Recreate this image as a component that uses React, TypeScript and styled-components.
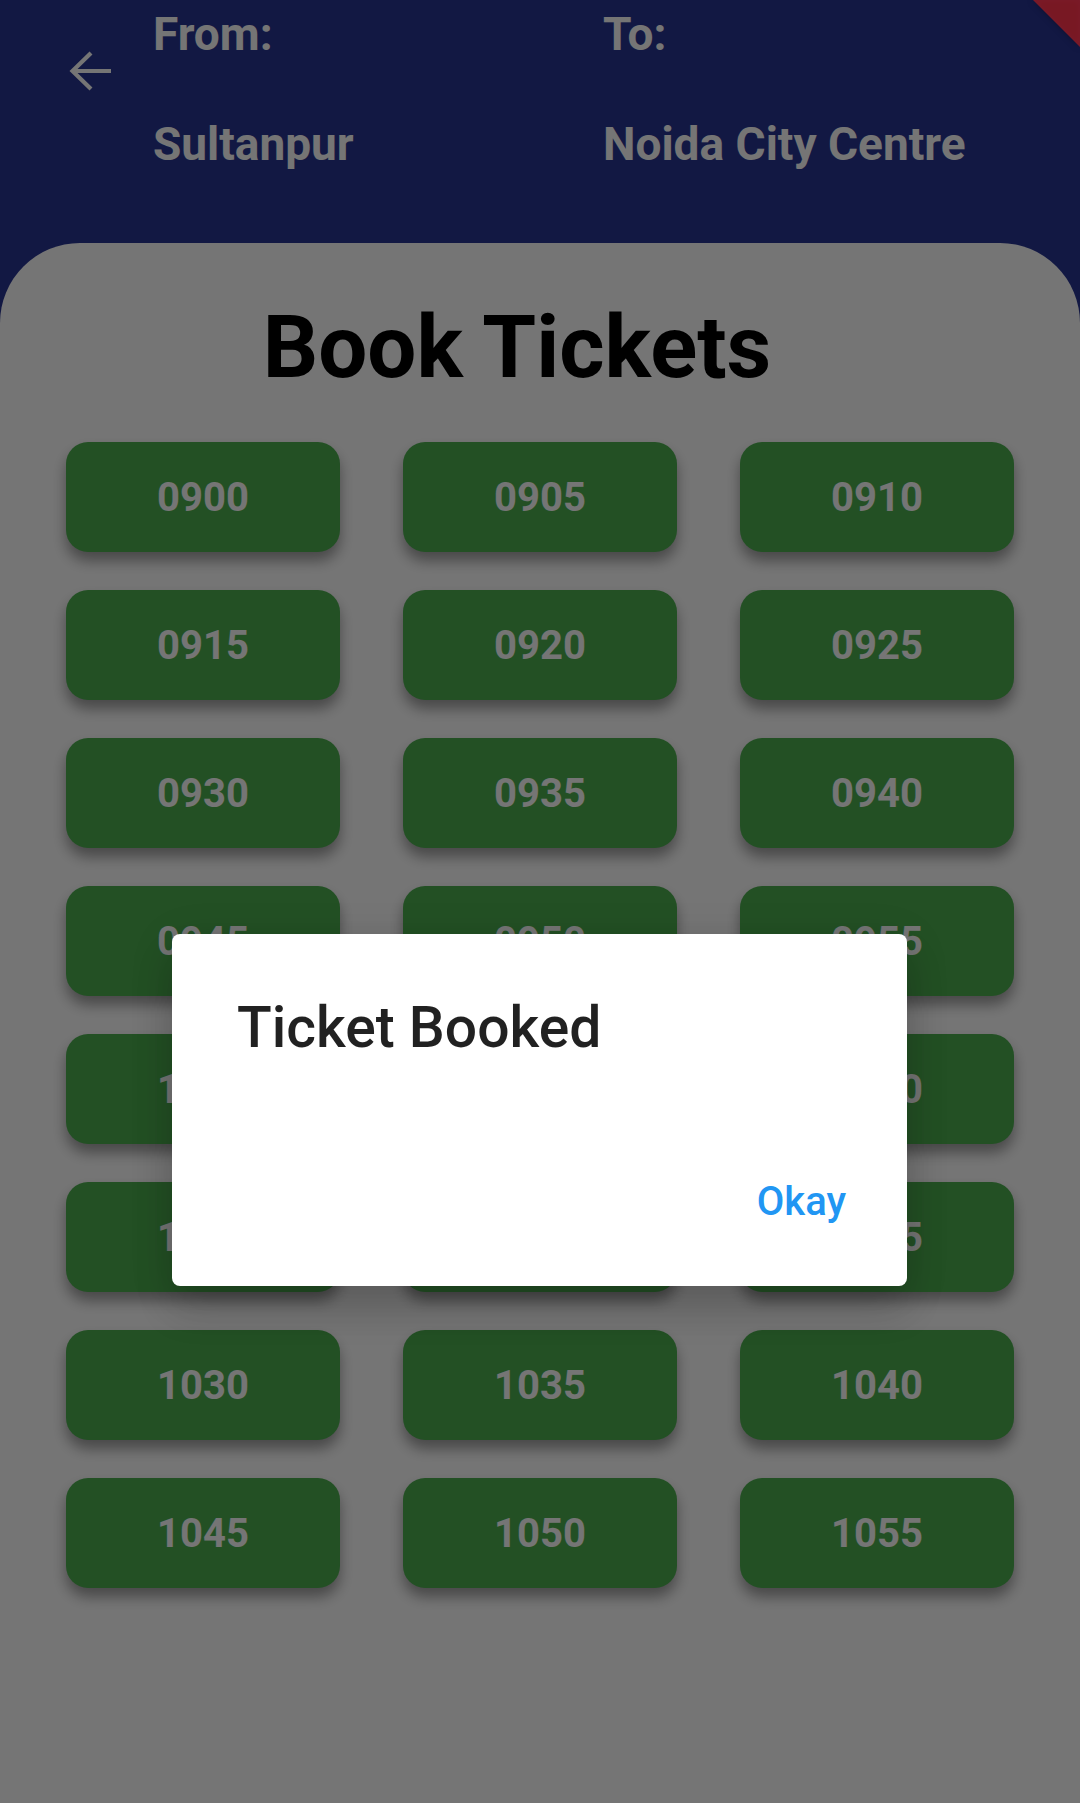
import React from "react";
import styled, { createGlobalStyle } from "styled-components";

const GlobalStyle = createGlobalStyle`
  html, body {
    margin: 0;
    padding: 0;
    background: #283593;
  }
  body {
    font-family: Roboto, "Noto Sans", "Liberation Sans", sans-serif;
  }
  * { box-sizing: border-box; }
`;

const Page = styled.div`
  width: 1080px;
  min-height: 1803px;
  background: #283593;
  display: flex;
  flex-direction: column;
  position: relative;
  overflow: hidden;
`;

const Header = styled.header`
  height: 243px;
  display: flex;
  align-items: flex-start;
  padding-top: 8px;
`;

const BackButton = styled.button`
  width: 66px;
  height: 66px;
  margin: 31px 29px 0 58px;
  padding: 0;
  border: none;
  background: transparent;
  display: flex;
  align-items: center;
  justify-content: center;
  color: #ffffff;
`;

const Place = styled.div<{ $width?: number }>`
  display: flex;
  flex-direction: column;
  gap: 58px;
  width: ${(p) => (p.$width ? `${p.$width}px` : "auto")};
`;

const PlaceText = styled.div`
  font-size: 46px;
  line-height: 52px;
  font-weight: 700;
  color: #ffffff;
  white-space: nowrap;
`;

const Card = styled.main`
  flex: 1;
  background: #ffffff;
  border-radius: 80px 80px 0 0;
  padding: 53px 66px 0;
  display: flex;
  flex-direction: column;
`;

const Title = styled.h1`
  margin: 0 46px 0 0;
  text-align: center;
  font-size: 87px;
  line-height: 103px;
  font-weight: 700;
  color: #000000;
`;

const TimeGrid = styled.div`
  margin-top: 43px;
  display: grid;
  grid-template-columns: repeat(3, 274px);
  column-gap: 63px;
  row-gap: 38px;
`;

const TimeButton = styled.button`
  height: 110px;
  border: none;
  border-radius: 22px;
  background: #4caf50;
  color: #ffffff;
  font-family: Roboto, "Noto Sans", sans-serif;
  font-size: 40px;
  font-weight: 700;
  display: flex;
  align-items: center;
  justify-content: center;
  box-shadow: 0 9px 14px rgba(0, 0, 0, 0.38);
`;

const Barrier = styled.div`
  position: absolute;
  inset: 0;
  background: rgba(0, 0, 0, 0.541);
`;

const Dialog = styled.div`
  position: absolute;
  top: 934px;
  left: 172px;
  width: 735px;
  height: 352px;
  background: #ffffff;
  border-radius: 8px;
  box-shadow: 0 24px 38px rgba(0, 0, 0, 0.14), 0 9px 46px rgba(0, 0, 0, 0.12);
  display: flex;
  flex-direction: column;
  justify-content: space-between;
  padding: 61px 61px 62px 65px;
`;

const DialogTitle = styled.h2`
  margin: 0;
  font-size: 57px;
  line-height: 66px;
  font-weight: 500;
  color: rgba(0, 0, 0, 0.87);
`;

const Actions = styled.div`
  display: flex;
  justify-content: flex-end;
`;

const TextButton = styled.button`
  border: none;
  background: transparent;
  padding: 0;
  font-family: Roboto, "Noto Sans", sans-serif;
  font-size: 40px;
  line-height: 45px;
  font-weight: 500;
  color: #2196f3;
`;

const Banner = styled.svg`
  position: absolute;
  top: 0;
  right: 0;
  filter: drop-shadow(0 0 3px rgba(0, 0, 0, 0.5));
`;

const times: string[] = [];
for (let h = 9; h <= 10; h++) {
  for (let m = 0; m < 60; m += 5) {
    times.push(`${String(h).padStart(2, "0")}${String(m).padStart(2, "0")}`);
  }
}

export default function App() {
  return (
    <>
      <GlobalStyle />
      <Page>
        <Header>
          <BackButton aria-label="Back">
            <svg width="44" height="44" viewBox="0 0 44 44" fill="none">
              <path
                d="M42 21H4M22 3 3.5 21 22 39"
                stroke="currentColor"
                strokeWidth="4.2"
                strokeLinecap="butt"
                strokeLinejoin="miter"
              />
            </svg>
          </BackButton>
          <Place $width={450}>
            <PlaceText>From:</PlaceText>
            <PlaceText>Sultanpur</PlaceText>
          </Place>
          <Place>
            <PlaceText>To:</PlaceText>
            <PlaceText>Noida City Centre</PlaceText>
          </Place>
        </Header>
        <Card>
          <Title>Book Tickets</Title>
          <TimeGrid>
            {times.map((t) => (
              <TimeButton key={t}>{t}</TimeButton>
            ))}
          </TimeGrid>
        </Card>
        <Barrier />
        <Dialog role="dialog">
          <DialogTitle>Ticket Booked</DialogTitle>
          <Actions>
            <TextButton>Okay</TextButton>
          </Actions>
        </Dialog>
        <Banner width="60" height="60" viewBox="0 0 60 60">
          <polygon points="13,0 60,0 60,47" fill="rgba(183,28,28,0.63)" />
        </Banner>
      </Page>
    </>
  );
}
